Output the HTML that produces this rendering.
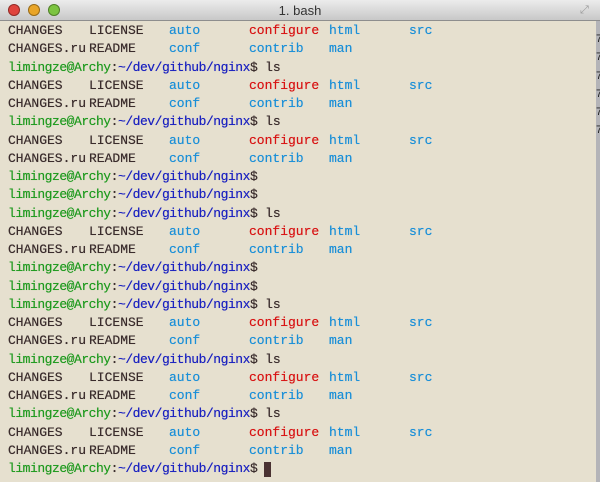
<!DOCTYPE html>
<html><head><style>
body{margin:0;width:600px;height:482px;overflow:hidden;background:#b4b4b8;font-family:"Liberation Sans",sans-serif}
.title{position:absolute;left:0;top:0;width:600px;height:21px;background:linear-gradient(#ececec,#c8c8c8);border-bottom:1px solid #8e8e8e;box-sizing:border-box}
.title span{position:absolute;left:0;right:0;top:3px;text-align:center;font-size:13px;color:#333}
.dot{position:absolute;top:4px;width:12px;height:12px;border-radius:50%;box-shadow:inset 0 0 0 1px rgba(0,0,0,.35)}
.term{position:absolute;left:0;top:21px;width:596px;height:461px;background:#e6e0cf}
.lines{position:absolute;left:8px;top:1px;font-family:"Liberation Mono",monospace;font-size:13px;color:#3a2c2c;text-shadow:0 0 0.4px currentColor}
.l{height:18.25px;line-height:18.25px;white-space:pre;display:flex}
.l i{font-style:normal;width:80px;flex:none}
.l i:first-child{width:81px}
.g{color:#1f9a1f;letter-spacing:-0.47px}.b{color:#1b22c0;letter-spacing:-0.47px}.p{letter-spacing:-0.47px}
.c{color:#1a8fd8}.r{color:#d81414}
.cur{display:inline-block;width:7px;height:15px;background:#4a3232;margin:2px 0 0 7px}
.side{position:absolute;left:596px;top:21px;font:11px "Liberation Sans",sans-serif;line-height:18.25px;color:#222}
</style></head><body>
<div class="title">
<div class="dot" style="left:8px;background:#e0443e"></div>
<div class="dot" style="left:28px;background:#e9a528"></div>
<div class="dot" style="left:48px;background:#7cc440"></div>
<span>1. bash</span>
<div style="position:absolute;left:580px;top:5px;width:11px;height:11px;color:#999;font-size:11px;line-height:11px">⤢</div>
</div>
<div class="term"><div class="lines">
<div class="l"><i>CHANGES</i><i>LICENSE</i><i class="c">auto</i><i class="r">configure</i><i class="c">html</i><i class="c">src</i></div>
<div class="l"><i>CHANGES.ru</i><i>README</i><i class="c">conf</i><i class="c">contrib</i><i class="c">man</i></div>
<div class="l"><span class="g">limingze@Archy</span><span class="p">:</span><span class="b">~/dev/github/nginx</span><span class="p">$</span> ls</div>
<div class="l"><i>CHANGES</i><i>LICENSE</i><i class="c">auto</i><i class="r">configure</i><i class="c">html</i><i class="c">src</i></div>
<div class="l"><i>CHANGES.ru</i><i>README</i><i class="c">conf</i><i class="c">contrib</i><i class="c">man</i></div>
<div class="l"><span class="g">limingze@Archy</span><span class="p">:</span><span class="b">~/dev/github/nginx</span><span class="p">$</span> ls</div>
<div class="l"><i>CHANGES</i><i>LICENSE</i><i class="c">auto</i><i class="r">configure</i><i class="c">html</i><i class="c">src</i></div>
<div class="l"><i>CHANGES.ru</i><i>README</i><i class="c">conf</i><i class="c">contrib</i><i class="c">man</i></div>
<div class="l"><span class="g">limingze@Archy</span><span class="p">:</span><span class="b">~/dev/github/nginx</span><span class="p">$</span></div>
<div class="l"><span class="g">limingze@Archy</span><span class="p">:</span><span class="b">~/dev/github/nginx</span><span class="p">$</span></div>
<div class="l"><span class="g">limingze@Archy</span><span class="p">:</span><span class="b">~/dev/github/nginx</span><span class="p">$</span> ls</div>
<div class="l"><i>CHANGES</i><i>LICENSE</i><i class="c">auto</i><i class="r">configure</i><i class="c">html</i><i class="c">src</i></div>
<div class="l"><i>CHANGES.ru</i><i>README</i><i class="c">conf</i><i class="c">contrib</i><i class="c">man</i></div>
<div class="l"><span class="g">limingze@Archy</span><span class="p">:</span><span class="b">~/dev/github/nginx</span><span class="p">$</span></div>
<div class="l"><span class="g">limingze@Archy</span><span class="p">:</span><span class="b">~/dev/github/nginx</span><span class="p">$</span></div>
<div class="l"><span class="g">limingze@Archy</span><span class="p">:</span><span class="b">~/dev/github/nginx</span><span class="p">$</span> ls</div>
<div class="l"><i>CHANGES</i><i>LICENSE</i><i class="c">auto</i><i class="r">configure</i><i class="c">html</i><i class="c">src</i></div>
<div class="l"><i>CHANGES.ru</i><i>README</i><i class="c">conf</i><i class="c">contrib</i><i class="c">man</i></div>
<div class="l"><span class="g">limingze@Archy</span><span class="p">:</span><span class="b">~/dev/github/nginx</span><span class="p">$</span> ls</div>
<div class="l"><i>CHANGES</i><i>LICENSE</i><i class="c">auto</i><i class="r">configure</i><i class="c">html</i><i class="c">src</i></div>
<div class="l"><i>CHANGES.ru</i><i>README</i><i class="c">conf</i><i class="c">contrib</i><i class="c">man</i></div>
<div class="l"><span class="g">limingze@Archy</span><span class="p">:</span><span class="b">~/dev/github/nginx</span><span class="p">$</span> ls</div>
<div class="l"><i>CHANGES</i><i>LICENSE</i><i class="c">auto</i><i class="r">configure</i><i class="c">html</i><i class="c">src</i></div>
<div class="l"><i>CHANGES.ru</i><i>README</i><i class="c">conf</i><i class="c">contrib</i><i class="c">man</i></div>
<div class="l"><span class="g">limingze@Archy</span><span class="p">:</span><span class="b">~/dev/github/nginx</span><span class="p">$</span><span class="cur"></span></div>
</div></div>
<div class="side" style="top:30px">7<br>7<br>7<br>7<br>7<br>7</div>
</body></html>
